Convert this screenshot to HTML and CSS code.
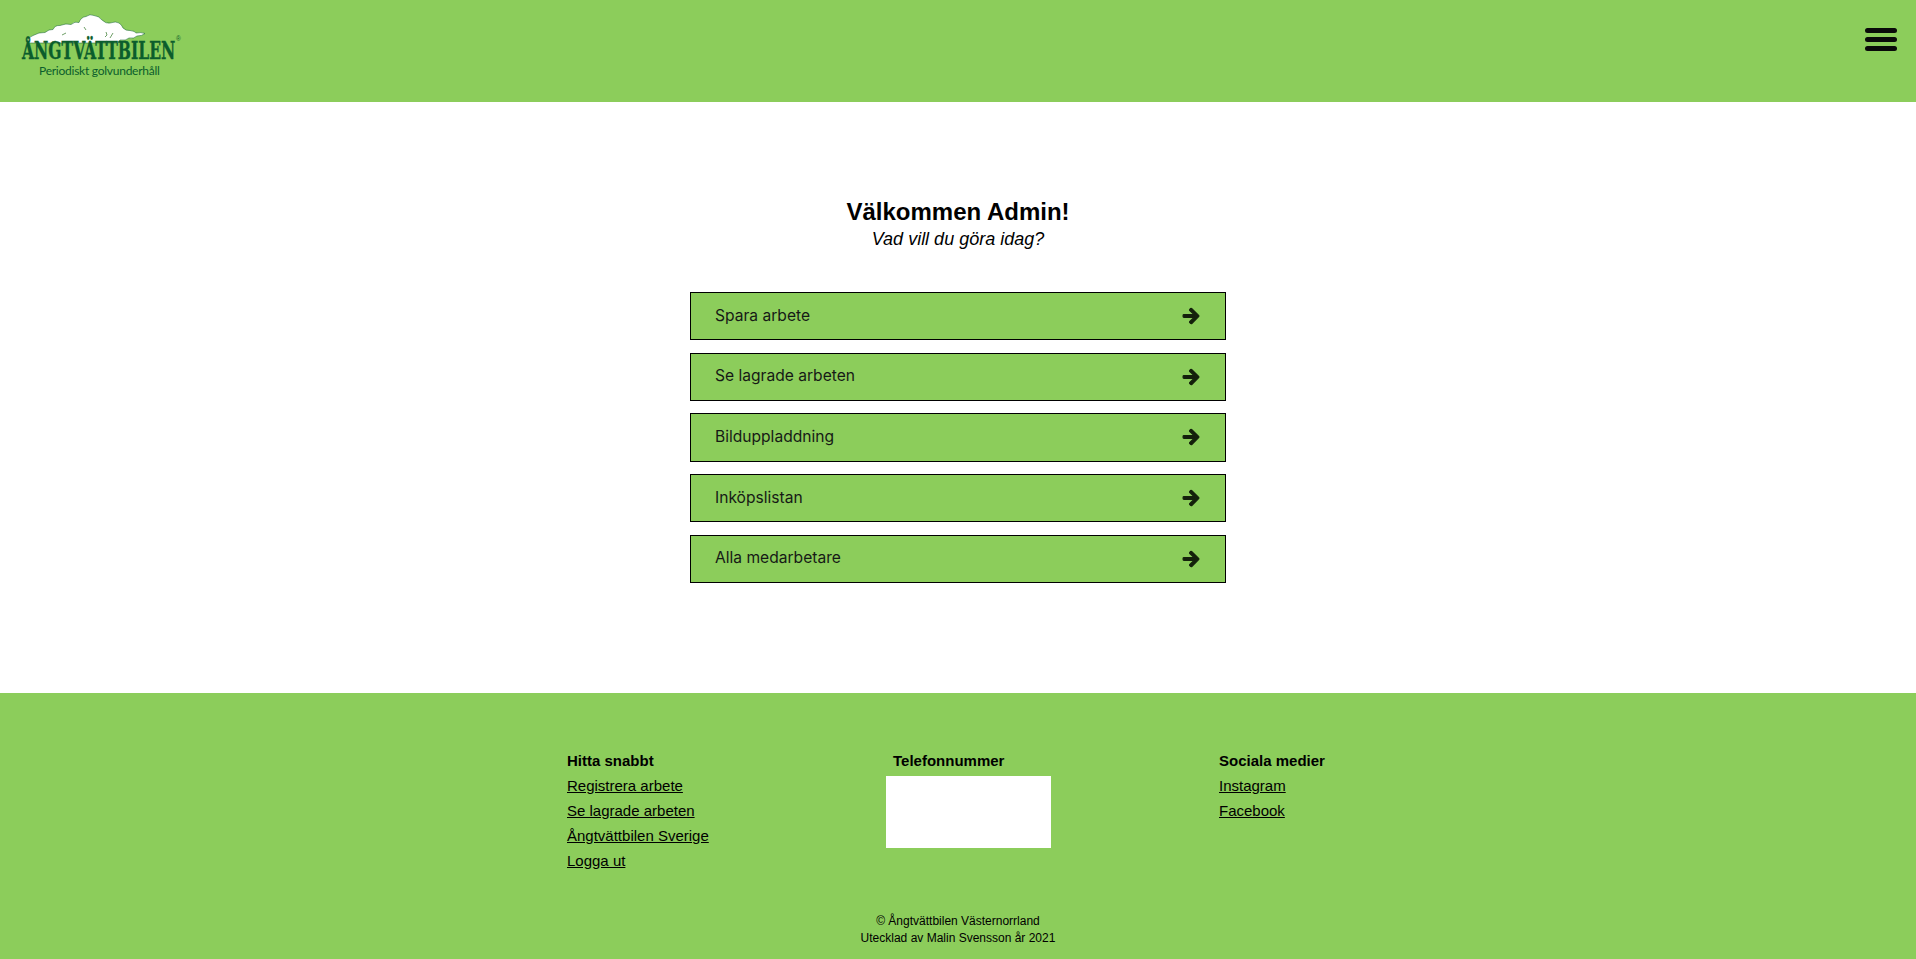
FILE: index.html
```html
<!DOCTYPE html>
<html lang="sv">
<head>
<meta charset="utf-8">
<title>Ångtvättbilen</title>
<link rel="stylesheet" href="styles.css">
</head>
<body>
<header class="topbar">
  <a class="logo" href="#">
    <svg class="logo-cloud" viewBox="22 12 130 32" aria-hidden="true">
      <path class="cloud-shape" d="M27 42 Q28 37 33 35.500 Q39 32 45 32.500 Q49 29 53 29.500 Q55 25 60 25.500 Q66 23 71 24.500 Q75 21 79 22.500 Q81 17 86 16.500 Q90 13.500 94 15.500 Q99 16 102 20 Q106 24 110 23 Q116 21 119 23 Q122 25 123 28 Q126 31 130 30.500 Q135 31 136 33 Q141 32 145 33.500 Q142 36 137 36 Q134 39 129 38 Q126 41 120 40 L118 43 L30 43 Z"/>
      <path class="cloud-mark" d="M84 27 l2 3 M106 32 l1 3 l-2 2 M113 33 l-3 5 M62 35 l4 -2"/>
    </svg>
    <span class="logo-name">ÅNGTVÄTTBILEN</span>
    <span class="logo-reg">®</span>
    <span class="logo-tag">Periodiskt golvunderhåll</span>
  </a>
  <button class="menu" type="button" aria-label="Meny">
    <span></span><span></span><span></span>
  </button>
</header>

<main class="content">
  <h1 class="title">Välkommen Admin!</h1>
  <p class="subtitle">Vad vill du göra idag?</p>
  <nav class="actions">
    <a class="action" href="#"><span class="action-label">Spara arbete</span><svg class="arrow" viewBox="0 0 448 512"><path d="M190.500 66.900l22.200-22.200c9.400-9.400 24.600-9.400 33.900 0L441 239c9.400 9.400 9.400 24.600 0 33.900L246.600 467.300c-9.400 9.400-24.600 9.400-33.900 0l-22.200-22.200c-9.500-9.500-9.300-25 .4-34.300L311.400 296H24c-13.300 0-24-10.700-24-24v-32c0-13.300 10.700-24 24-24h287.400L190.900 101.200c-9.800-9.300-10-24.800-.4-34.300z"/></svg></a>
    <a class="action" href="#"><span class="action-label">Se lagrade arbeten</span><svg class="arrow" viewBox="0 0 448 512"><path d="M190.500 66.900l22.200-22.200c9.400-9.400 24.600-9.400 33.900 0L441 239c9.400 9.400 9.400 24.600 0 33.900L246.600 467.300c-9.400 9.400-24.600 9.400-33.900 0l-22.200-22.200c-9.500-9.500-9.300-25 .4-34.300L311.400 296H24c-13.300 0-24-10.700-24-24v-32c0-13.300 10.700-24 24-24h287.400L190.900 101.200c-9.800-9.300-10-24.800-.4-34.300z"/></svg></a>
    <a class="action" href="#"><span class="action-label">Bilduppladdning</span><svg class="arrow" viewBox="0 0 448 512"><path d="M190.500 66.900l22.200-22.200c9.400-9.400 24.600-9.400 33.900 0L441 239c9.400 9.400 9.400 24.600 0 33.900L246.600 467.300c-9.400 9.400-24.600 9.400-33.900 0l-22.200-22.200c-9.500-9.500-9.300-25 .4-34.300L311.400 296H24c-13.300 0-24-10.700-24-24v-32c0-13.300 10.700-24 24-24h287.400L190.900 101.200c-9.800-9.300-10-24.800-.4-34.300z"/></svg></a>
    <a class="action" href="#"><span class="action-label">Inköpslistan</span><svg class="arrow" viewBox="0 0 448 512"><path d="M190.500 66.900l22.200-22.200c9.400-9.400 24.600-9.400 33.900 0L441 239c9.400 9.400 9.400 24.600 0 33.900L246.600 467.300c-9.400 9.400-24.600 9.400-33.900 0l-22.200-22.200c-9.500-9.500-9.300-25 .4-34.300L311.400 296H24c-13.300 0-24-10.700-24-24v-32c0-13.300 10.700-24 24-24h287.400L190.900 101.200c-9.800-9.300-10-24.800-.4-34.300z"/></svg></a>
    <a class="action" href="#"><span class="action-label">Alla medarbetare</span><svg class="arrow" viewBox="0 0 448 512"><path d="M190.500 66.900l22.200-22.200c9.400-9.400 24.600-9.400 33.900 0L441 239c9.400 9.400 9.400 24.600 0 33.900L246.600 467.300c-9.400 9.400-24.600 9.400-33.900 0l-22.200-22.200c-9.500-9.500-9.300-25 .4-34.300L311.400 296H24c-13.300 0-24-10.700-24-24v-32c0-13.300 10.700-24 24-24h287.400L190.900 101.200c-9.800-9.300-10-24.800-.4-34.300z"/></svg></a>
  </nav>
</main>

<footer class="footer">
  <div class="columns">
    <div class="col">
      <h2 class="col-title">Hitta snabbt</h2>
      <a href="#">Registrera arbete</a>
      <a href="#">Se lagrade arbeten</a>
      <a href="#">Ångtvättbilen Sverige</a>
      <a href="#">Logga ut</a>
    </div>
    <div class="col col-phone">
      <h2 class="col-title">Telefonnummer</h2>
      <div class="phone-box"></div>
    </div>
    <div class="col">
      <h2 class="col-title">Sociala medier</h2>
      <a href="#">Instagram</a>
      <a href="#">Facebook</a>
    </div>
  </div>
  <div class="legal">
    <p>© Ångtvättbilen Västernorrland</p>
    <p>Utecklad av Malin Svensson år 2021</p>
  </div>
</footer>
</body>
</html>
```
FILE: styles.css
```css
* { box-sizing: border-box; }
html, body { margin: 0; padding: 0; }
body {
  height: 959px;
  display: flex;
  flex-direction: column;
  font-family: "Liberation Sans", Arial, sans-serif;
  color: #000;
  background: #fff;
  overflow: hidden;
}
.topbar {
  height: 102px;
  flex: none;
  background: #8ccd5b;
  display: flex;
  justify-content: space-between;
  padding: 12px 19px 0 22px;
}
.logo {
  position: relative;
  display: block;
  width: 156px;
  height: 68px;
  text-decoration: none;
}
.logo-cloud {
  position: absolute;
  left: 0;
  top: 0;
  width: 130px;
  height: 32px;
}
.cloud-shape { fill: #fff; stroke: #0b5d2c; stroke-width: 0.5; }
.cloud-mark { fill: none; stroke: #6f9f68; stroke-width: 1; }
.logo-name {
  position: absolute;
  left: 0;
  top: 30px;
  font-family: "DejaVu Serif", serif;
  font-weight: 700;
  font-size: 24px;
  line-height: 18px;
  color: #0b5d2c;
  white-space: nowrap;
  transform: scaleX(0.648);
  transform-origin: left top;
  -webkit-text-stroke: 0.4px #0b5d2c;
}
.logo-reg {
  position: absolute;
  left: 154px;
  top: 23px;
  font-size: 6.500px;
  line-height: 7px;
  color: #0b5d2c;
}
.logo-tag {
  position: absolute;
  left: 17px;
  top: 51px;
  font-family: Lato, sans-serif;
  font-size: 12px;
  line-height: 16px;
  letter-spacing: -0.25px;
  color: #0b5d2c;
  white-space: nowrap;
}
.menu {
  width: 32px;
  height: 23px;
  margin-top: 15.500px;
  padding: 0;
  border: 0;
  background: none;
  display: flex;
  flex-direction: column;
  justify-content: space-between;
}
.menu span {
  display: block;
  height: 5px;
  border-radius: 3px;
  background: #0a0a0a;
}
.content {
  flex: 1;
  display: flex;
  flex-direction: column;
  align-items: center;
  padding-top: 95px;
}
.title {
  margin: 0;
  font-size: 24px;
  line-height: 30px;
  font-weight: 700;
}
.subtitle {
  margin: 0 0 41px;
  font-size: 18px;
  line-height: 24px;
  font-style: italic;
}
.actions {
  display: flex;
  flex-direction: column;
  gap: 12.5px;
  width: 536px;
}
.action {
  height: 48.200px;
  display: flex;
  align-items: center;
  justify-content: space-between;
  padding: 0 26px 0 24px;
  border: 1.5px solid #000;
  background: #8ccd5b;
  color: #161a16;
  font-family: Inter, sans-serif;
  font-size: 15.6px;
  text-decoration: none;
}
.action-label { padding-bottom: 2px; }
.arrow {
  width: 16px;
  height: 18px;
  fill: #14210c;
  stroke: #14210c;
  stroke-width: 36;
  stroke-linejoin: round;
  overflow: visible;
}
.footer {
  height: 266px;
  flex: none;
  background: #8ccd5b;
  padding-top: 55px;
}
.columns {
  display: flex;
  margin-left: 567px;
}
.col { width: 326px; display: flex; flex-direction: column; }
.col a {
  color: #000;
  font-size: 15px;
  line-height: 25px;
}
.col-title {
  margin: 0;
  font-size: 15px;
  line-height: 25px;
  font-weight: 700;
}
.phone-box {
  width: 165px;
  height: 72px;
  margin-left: -7px;
  margin-top: 3px;
  background: #fff;
}
.legal {
  margin-top: 40px;
  text-align: center;
  font-size: 12px;
  line-height: 17px;
}
.legal p { margin: 0; }
```
